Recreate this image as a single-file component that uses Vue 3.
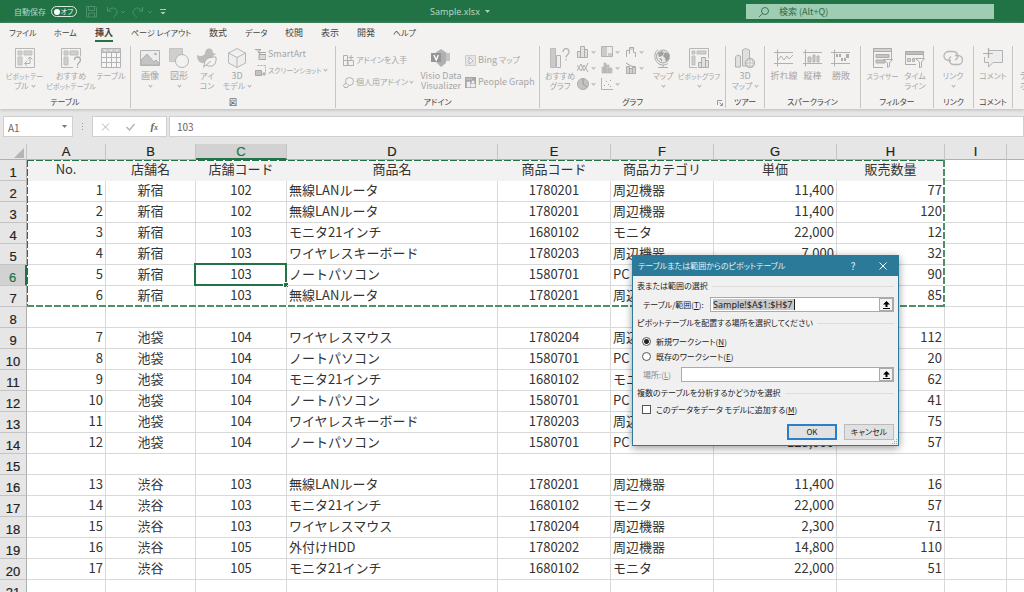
<script setup>
import { ref } from 'vue'

const tabs = ['ファイル', 'ホーム', '挿入', 'ページ レイアウト', '数式', 'データ', '校閲', '表示', '開発', 'ヘルプ']

const icons = {
  pivot: '<path d="M.5.5h19v19H.5z" fill="none" stroke="#adadad"/><path d="M3 3h4v4H3zM9 3h8v4H9zM3 9h4v8H3z" fill="#c9c9c9" stroke="#b9b9b9"/><path d="M10 15.500h5v-6M12 13l-2.500 2.500L12 18M12.500 11.500L15 9l2.500 2.500" fill="none" stroke="#a5a5a5"/>',
  pivotHelp: '<path d="M12 19.500H.5V.5h19v8" fill="none" stroke="#adadad"/><path d="M3 3h4v4H3zM9 3h8v4H9zM3 9h4v8H3z" fill="#c9c9c9" stroke="#b5b5b5"/><path d="M13.500 12c0-4 6-4 6 0 0 2.500-3 2.500-3 5.500M16.500 18.500v1.500" fill="none" stroke="#a2a2a2" stroke-width="1.300"/>',
  table: '<path d="M.5.5h19v19H.5z" fill="#f7f7f7" stroke="#a9a9a9"/><path d="M1 1h18v3H1z" fill="#c2c2c2"/><path d="M.5 4.500h19M.5 9.500h19M.5 14.500h19M5.500 4v15M10.500 4v15M15.500 4v15" stroke="#a9a9a9"/><path d="M3 1.500l1 1.500 1-1.500M9 1.500l1 1.500 1-1.500M15 1.500l1 1.500 1-1.500" stroke="#f5f5f5" fill="none"/>',
  image: '<path d="M.5 2.500h19v15H.5z" fill="#ededed" stroke="#a9a9a9"/><path d="M1 17V12l6-6 7 8 2-2 3 3v2z" fill="#bdbdbd" stroke="#a5a5a5"/><circle cx="15.500" cy="6" r="1.300" fill="#a9a9a9"/>',
  shapes: '<path d="M.5.5h13v13H.5z" fill="#cacaca" stroke="#bdbdbd"/><circle cx="13" cy="13" r="6.500" fill="#f2f2f2" stroke="#a9a9a9"/>',
  icons: '<path d="M0 7c3 2 6 1 8-1 0-7 8-7 8-1l3 1-3 2c1 3 2 4 0 7H5C1 14 0 11 0 7z" fill="#b4b4b4"/><path d="M7 19c0-8 4-10 12-10 1 8-4 11-10 8M6 19.500l8-6.500" fill="#f3f2f1" stroke="#a5a5a5"/>',
  cube: '<path d="M10 .5l8.500 4.500v10L10 19.500 1.500 15V5zM1.500 5l8.500 4.500L18.500 5M10 9.500v10" fill="#eee" stroke="#adadad"/>',
  visio: '<path d="M10 1l6 4-6 5-6-5z" fill="#aaa"/><path d="M13 5h6v8h-6z" fill="#bdbdbd"/><path d="M9 5h6v10l-5 4-5-5z" fill="#a5a5a5"/><path d="M0 5h10v9H0z" fill="#858585"/><path d="M3 7l2.200 5 2.200-5" fill="none" stroke="#fff" stroke-width="1.400"/>',
  chartHelp: '<path d="M.5.5h5v19h-5z" fill="#c4c4c4" stroke="#b2b2b2"/><path d="M6.500 7.500h4v12h-4z" fill="#eee" stroke="#a9a9a9"/><path d="M13 4c0-4.500 6-4.500 6 0 0 2.500-3 2.500-3 5.500M16 11v1.500" fill="none" stroke="#a9a9a9" stroke-width="1.300"/>',
  globe: '<circle cx="10" cy="8.500" r="6.500" fill="#e5e5e5" stroke="#999"/><path d="M5 5l4-2 2 2-2 3-3 1zM12 4l4 2v5l-3 3-1-4-2-2zM6 10l3 1v3z" fill="#929292"/><path d="M5 1.500C0 5 1 14 7 16.500c3 1 6 .5 8-1M10 17v2M5 19.500h10" fill="none" stroke="#a0a0a0"/>',
  pivotChart: '<path d="M8 19.500H.5V.5h19v10" fill="none" stroke="#adadad"/><path d="M3 3h3v3H3zM8 3h9v3H8zM3 8h3v9H3z" fill="#c9c9c9" stroke="#b5b5b5"/><path d="M9.500 14.500h3v5h-3zM12.500 9.500h4v10h-4zM16.500 12.500h3v7h-3z" fill="#ddd" stroke="#a0a0a0"/>',
  map3d: '<path d="M.5 9l2-2 3 1v11h-5zM7.500 2l3-1.500 4 1.500v16h-7z" fill="#ddd" stroke="#a5a5a5"/><circle cx="15" cy="15" r="4.700" fill="#f3f2f1" stroke="#a0a0a0"/><path d="M10.500 15h9M15 10.500v9M12 12h6M12 18h6M13 11c-1.500 3-1.500 5 0 8M17 11c1.500 3 1.500 5 0 8" fill="none" stroke="#a9a9a9" stroke-width=".7"/>',
  sparkLine: '<path d="M0 4.500h19M0 15.500h19M3.500 1.500v17" stroke="#a5a5a5"/><path d="M4 12l3-4 3 4 3-4 2 3 4-4" fill="none" stroke="#a5a5a5"/>',
  sparkBar: '<path d="M0 4.500h19M0 15.500h19M2.500 1.500v17" stroke="#a5a5a5"/><path d="M5 9h3v5H5zM10 7h2v7h-2zM14 8h2v6h-2z" fill="#c4c4c4" stroke="#a9a9a9"/>',
  sparkWin: '<path d="M0 4.500h19M0 15.500h19M3.500 1.500v17" stroke="#a5a5a5"/><path d="M5 6h2v3H5zM8 6h2v3H8zM10 10h2v3h-2zM13 10h2v3h-2zM15 6h3v4h-3z" fill="#a0a0a0"/>',
  slicer: '<path d="M10 19.500H.5V.5h18v11" fill="none" stroke="#a0a0a0"/><path d="M.5.5h18v3H.5z" fill="#ccc" stroke="#a0a0a0"/><path d="M3 6.500h13v3H3zM3 12h9v3H3z" fill="#bcbcbc" stroke="#a2a2a2"/><path d="M10.500 11.500h9L16.500 15v3.500l-2 1V15z" fill="#f3f2f1" stroke="#a0a0a0"/>',
  timeline: '<path d="M11 16.500H.5V3.500h18v6" fill="none" stroke="#a0a0a0"/><path d="M.5 3.500h18v3H.5z" fill="#b4b4b4" stroke="#a0a0a0"/><path d="M2.500 10.500h3v3h-3zM7.500 10.500h2v3h-2z" fill="#ccc" stroke="#a9a9a9"/><path d="M10.500 10.500h9L16.500 14v5l-2 1v-6z" fill="#f3f2f1" stroke="#a0a0a0"/>',
  link: '<path d="M8 12.500H6a5 4.500 0 0 1 0-9h4a5 4.500 0 0 1 2 8.500M12 7.500h3a4.500 4.500 0 0 1 0 9h-5a4.500 4.500 0 0 1-2-8" fill="none" stroke="#adadad" stroke-width="1.300"/>',
  comment: '<path d="M6 2.500h13.500v12H10L5.500 19v-4.500H1.500V9" fill="#ededed" stroke="#a9a9a9"/><path d="M0 5.500h10M5.500 0v10" stroke="#a0a0a0" stroke-width="1.200"/>'
}

const charts = [
  '<path d="M.5 5.500h3v6h-3zM3.500.5h4v11h-4zM7.500 3.500h3v8h-3z" fill="#ddd" stroke="#a0a0a0"/>',
  '<path d="M.5.5h11v10H.5z" fill="#eee" stroke="#a9a9a9"/><path d="M1 1h5v9H1zM7 7h4v3H7z" fill="#c4c4c4"/>',
  '<path d="M1.500 11V4.500h3v-3h4v5h2V11M4.500 4v4M8.500 5v-4" fill="none" stroke="#a0a0a0"/><path d="M5 2h3v2H5z" fill="#ccc"/>',
  '<path d="M0 9l4-7 3 7 4-8M0 3l4 6 3-6 4 7" fill="none" stroke="#a0a0a0"/>',
  '<path d="M1 5h2v6H1zM3 1h2v10H3zM5 3h3v8H5zM8 6h3v5H8z" fill="#bbb" stroke="#a5a5a5" stroke-width=".6"/>',
  '<path d="M1.500 4.500h3v7h-3zM4.500 6.500h3v5h-3zM7.500 5.500h3v6h-3z" fill="#ccc" stroke="#a0a0a0"/><path d="M1 1l5 3 5 1" fill="none" stroke="#999"/>',
  '<circle cx="6" cy="6" r="5.500" fill="#bbb" stroke="#a0a0a0"/><path d="M6 6V1M6 6l4 3" stroke="#8a8a8a" fill="none"/>',
  '<path d="M.5 0v11.500H12" fill="none" stroke="#a9a9a9"/><path d="M3 7h1v1H3zM5 3h1v1H5zM7 6h1v1H7zM9 2h1v1H9zM9 8h1v1H9z" fill="#999"/>'
]

const b = (icon, lines, drop = '') => ({ icon, lines, drop })
const groups = [
  { key: 'tables', label: 'テーブル', items: [b('pivot', ['ピボットテー', 'ブル'], 'inline'), b('pivotHelp', ['おすすめ', 'ピボットテーブル']), b('table', ['テーブル'])] },
  { key: 'illust', label: '図', items: [b('image', ['画像'], 'below'), b('shapes', ['図形'], 'below'), b('icons', ['アイ', 'コン']), b('cube', ['3D', 'モデル'], 'inline')] },
  { key: 'addin', label: 'アドイン', items: [b('visio', ['Visio Data', 'Visualizer'])] },
  { key: 'chart', label: 'グラフ', items: [b('chartHelp', ['おすすめ', 'グラフ'])], more: [b('globe', ['マップ'], 'below'), b('pivotChart', ['ピボットグラフ'], 'below')] },
  { key: 'tour', label: 'ツアー', items: [b('map3d', ['3D', 'マップ'], 'inline')] },
  { key: 'spark', label: 'スパークライン', items: [b('sparkLine', ['折れ線']), b('sparkBar', ['縦棒']), b('sparkWin', ['勝敗'])] },
  { key: 'filter', label: 'フィルター', items: [b('slicer', ['スライサー']), b('timeline', ['タイム', 'ライン'])] },
  { key: 'link', label: 'リンク', items: [b('link', ['リンク'], 'below')] },
  { key: 'comment', label: 'コメント', items: [b('comment', ['コメント'])] }
]

// Kana labels are set smaller than kanji and Latin ones; the longest are smaller still.
const textSize = (s) => {
  if (!/^[ぁ-んァ-ー\s]+$/.test(s)) return ''
  return s.length > 4 && !s.includes(' ') ? 'kana long' : 'kana'
}

const cols = ['A', 'B', 'C', 'D', 'E', 'F', 'G', 'H', 'I', 'J']
const products = {
  lan: ['無線LANルータ', '1780201', '周辺機器', '11,400'],
  monitor: ['モニタ21インチ', '1680102', 'モニタ', '22,000'],
  keyboard: ['ワイヤレスキーボード', '1780203', '周辺機器', '7,000'],
  note: ['ノートパソコン', '1580701', 'PC', '128,000'],
  mouse: ['ワイヤレスマウス', '1780204', '周辺機器', '2,300'],
  hdd: ['外付けHDD', '1780202', '周辺機器', '14,800']
}
const sale = (no, shop, code, p, qty) => [no, shop, code, ...products[p], qty, '', '']
const blank = Array(10).fill('')
const rows = [
  ['No.', '店舗名', '店舗コード', '商品名', '商品コード', '商品カテゴリ', '単価', '販売数量', '', ''],
  sale(1, '新宿', 102, 'lan', 77),
  sale(2, '新宿', 102, 'lan', 120),
  sale(3, '新宿', 103, 'monitor', 12),
  sale(4, '新宿', 103, 'keyboard', 32),
  sale(5, '新宿', 103, 'note', 90),
  sale(6, '新宿', 103, 'lan', 85),
  blank,
  sale(7, '池袋', 104, 'mouse', 112),
  sale(8, '池袋', 104, 'note', 20),
  sale(9, '池袋', 104, 'monitor', 62),
  sale(10, '池袋', 104, 'note', 41),
  sale(11, '池袋', 104, 'keyboard', 75),
  sale(12, '池袋', 104, 'note', 57),
  blank,
  sale(13, '渋谷', 103, 'lan', 16),
  sale(14, '渋谷', 103, 'monitor', 57),
  sale(15, '渋谷', 103, 'mouse', 71),
  sale(16, '渋谷', 105, 'hdd', 110),
  sale(17, '渋谷', 105, 'monitor', 51),
  blank
]

const cellName = ref('A1')
const formula = ref('103')
const range = ref('Sample!$A$1:$H$7')
const target = ref('new')
const query = ref('')
</script>

<template>
  <div class="app">
    <header class="titlebar">
      <label class="autosave">自動保存
        <button class="toggle" type="button" aria-label="自動保存"><i></i>オフ</button>
      </label>
      <svg class="quick" viewBox="0 0 76 12" fill="none" stroke="#5f9f7c">
        <path d="M.5.5h9l1 1v9.500H.5zM2.500.5v4h6v-4M2.500 11V7h6v4" />
        <path d="M21.500 1v4h4M22 5c3-5 9-3 9 1 0 2-2 4-4 5.500M35 5l2 2 2-2" />
        <path d="M56.500 1v4h-4M56 5c-3-5-9-3-9 1 0 2 2 4 4 5.500M62 5l2 2 2-2" />
      </svg>
      <svg class="qmore" viewBox="0 0 6 6"><path d="M0 .5h6" stroke="#a9cfb9" /><path d="M.5 3h5L3 5.500z" fill="#a9cfb9" /></svg>
      <div class="doc">Sample.xlsx <svg viewBox="0 0 5 3"><path d="M0 0h5L2.500 3z" fill="#a9cfb9" /></svg></div>
      <label class="search">
        <svg viewBox="0 0 10 10" fill="none" stroke="#39794f"><circle cx="6" cy="4" r="3.500" /><path d="M3.500 6.500L0 10" /></svg>
        <input v-model="query" aria-label="検索" placeholder="検索 (Alt+Q)">
      </label>
    </header>

    <section class="ribbon">
      <nav class="tabs">
        <button v-for="t in tabs" :key="t" type="button" :class="[{ active: t === '挿入' }, textSize(t) ? 'kana' : '']">{{ t }}</button>
      </nav>
      <div class="groups">
        <div v-for="g in groups" :key="g.key" class="group" :class="g.key">
          <div class="tools">
            <div v-if="g.key === 'addin'" class="side wide">
              <button type="button" class="kana"><svg viewBox="0 0 11 11" fill="none" stroke="#a5a5a5"><path d="M.5.5h4v10h-4zM.5 5.500h10v5h-10zM5 5V10M8 0v5M5.500 2.500h5" /></svg>アドインを入手</button>
              <button type="button" class="kana"><svg viewBox="0 0 11 11" fill="none" stroke="#a5a5a5"><circle cx="6.500" cy="4.500" r="4" /><path d="M3.500 7L2 6.500l-1.500 2 1 2h3l1-2" fill="#f3f2f1" /></svg>個人用アドイン<span class="chev"></span></button>
            </div>
            <button v-for="i in g.items" :key="i.icon" class="big" type="button">
              <svg viewBox="0 0 20 20" v-html="icons[i.icon]"></svg>
              <span v-for="(l, n) in i.lines" :key="l" :class="textSize(l)">{{ l }}<i v-if="i.drop === 'inline' && n === 1" class="chev"></i></span>
              <span v-if="i.drop === 'below'"><i class="chev"></i></span>
            </button>
            <div v-if="g.key === 'illust'" class="side">
              <button type="button"><svg viewBox="0 0 11 11"><path d="M0 .5h6L3 3l3 2.500M4 3.500h7M4 5.500h7v5H4z" fill="#d5d5d5" stroke="#999" /></svg>SmartArt</button>
              <button type="button" class="kana long"><svg viewBox="0 0 11 11"><path d="M2.500.5h8v8" fill="none" stroke="#a5a5a5" stroke-dasharray="2 1" /><path d="M.5 5.500h6v5h-6z" fill="#bbb" stroke="#999" /><path d="M9 7v4M7 9h4" stroke="#999" /></svg>スクリーンショット<span class="chev"></span></button>
            </div>
            <div v-if="g.key === 'addin'" class="side wide">
              <button type="button"><svg viewBox="0 0 11 11"><path d="M.5.5h10v10H.5z" fill="#e4e2e8" stroke="#c8c5cc" /><path d="M4 2v7l4-3z" fill="#fff" stroke="#aaa" /></svg><span>Bing <span class="kana">マップ</span></span></button>
              <button type="button"><svg viewBox="0 0 11 11"><path d="M0 0h11v11H0z" fill="#999" /><path d="M1 2h6M2 5h3v5H2zM7 4h2v2H7zM6 7h4v3H6z" stroke="#eee" fill="#eee" stroke-width=".6" /></svg>People Graph</button>
            </div>
            <template v-if="g.key === 'chart'">
              <div class="minis">
                <button v-for="(c, n) in charts" :key="n" type="button" aria-label="グラフの種類"><svg viewBox="0 0 12 12" v-html="c"></svg><i class="chev"></i></button>
              </div>
              <button v-for="i in g.more" :key="i.icon" class="big" type="button">
                <svg viewBox="0 0 20 20" v-html="icons[i.icon]"></svg>
                <span v-for="l in i.lines" :key="l" :class="textSize(l)">{{ l }}</span>
                <span><i class="chev"></i></span>
              </button>
            </template>
          </div>
          <div class="caption kana">{{ g.label }}</div>
          <svg v-if="g.key === 'chart'" class="launch" viewBox="0 0 6 6" fill="none" stroke="#999"><path d="M.5 5V.5H5M2.500 2.500l3 3M5.500 3v2.500H3" /></svg>
        </div>
        <div class="group cut"><div class="tools"><button class="big" type="button"><svg viewBox="0 0 20 20"></svg><span>テキ</span><span>ボック</span></button></div></div>
      </div>
    </section>

    <section class="formula">
      <label class="name"><input v-model="cellName" aria-label="名前ボックス"><svg viewBox="0 0 5 3"><path d="M0 0h5L2.500 3z" fill="#777" /></svg></label>
      <svg class="dots" viewBox="0 0 2 8"><path d="M0 0h1v1H0zM0 3h1v1H0zM0 6h1v1H0z" fill="#999" /></svg>
      <div class="fx">
        <button type="button" aria-label="キャンセル"><svg viewBox="0 0 9 8" fill="none" stroke="#b5b5b5"><path d="M1 .5l7 7M8 .5l-7 7" /></svg></button>
        <button type="button" aria-label="入力"><svg viewBox="0 0 9 8" fill="none" stroke="#b5b5b5" stroke-width="1.500"><path d="M.5 4l3 3 5-6" /></svg></button>
        <button type="button" class="fn"><em>f<small>x</small></em></button>
      </div>
      <input v-model="formula" class="value" aria-label="数式">
    </section>

    <main class="sheet">
      <table>
        <colgroup>
          <col class="c-head"><col v-for="c in cols" :key="c" :class="'c-' + c">
        </colgroup>
        <thead>
          <tr>
            <th class="corner"><svg viewBox="0 0 10 10"><path d="M10 0v10H0z" fill="#b4b4b4" /></svg></th>
            <th v-for="c in cols" :key="c" scope="col" :class="{ on: c === 'C' }">{{ c === 'J' ? '' : c }}</th>
          </tr>
        </thead>
        <tbody>
          <tr v-for="(r, n) in rows" :key="n" :class="{ heading: n === 0 }">
            <th scope="row" :class="{ on: n === 5 }">{{ n + 1 }}</th>
            <td v-for="(v, k) in r" :key="k" :class="['d-' + cols[k], { current: n === 5 && k === 2 }]">{{ v }}</td>
          </tr>
        </tbody>
      </table>
      <svg class="ants" viewBox="0 0 918 147" fill="none" stroke="#217346">
        <path d="M0 .5h918M.5 0v147" stroke="#fff" />
        <path d="M0 .5h918M.5 0v147" stroke-dasharray="7 2" />
        <path d="M0 146h918M917 0v147" stroke="#fff" stroke-width="2" />
        <path d="M0 146h918M917 0v147" stroke-dasharray="7 2" stroke-width="2" opacity=".8" />
      </svg>
    </main>

    <form class="dialog" role="dialog" aria-labelledby="dlg-title" @submit.prevent>
      <div class="dlg-bar">
        <span id="dlg-title">テーブルまたは範囲からのピボットテーブル</span>
        <button type="button">?</button>
        <button type="button" aria-label="閉じる"><svg viewBox="0 0 8 8" stroke="#fff"><path d="M.5.5l7 7M7.500.5l-7 7" /></svg></button>
      </div>
      <div class="dlg-body">
        <div class="legend">表または範囲の選択</div>
        <div class="field">
          <label for="range">テーブル/範囲(<u>T</u>):</label>
          <span class="picker"><span class="sel"><input id="range" v-model="range"></span><button type="button" aria-label="範囲を選択"><svg viewBox="0 0 7 8"><path d="M3.500 0L7 3.500H4.500V6h-2V3.500H0zM0 7h7v1H0z" fill="#000" /></svg></button></span>
        </div>
        <div class="legend place">ピボットテーブルを配置する場所を選択してください</div>
        <label class="opt"><input v-model="target" type="radio" value="new"><span>新規ワークシート(<u>N</u>)</span></label>
        <label class="opt"><input v-model="target" type="radio" value="old"><span>既存のワークシート(<u>E</u>)</span></label>
        <div class="field loc">
          <label for="loc">場所:(<u>L</u>)</label>
          <span class="picker"><span class="sel"><input id="loc"></span><button type="button" aria-label="場所を選択"><svg viewBox="0 0 7 8"><path d="M3.500 0L7 3.500H4.500V6h-2V3.500H0zM0 7h7v1H0z" fill="#000" /></svg></button></span>
        </div>
        <div class="legend multi">複数のテーブルを分析するかどうかを選択</div>
        <label class="opt"><input type="checkbox"><span>このデータをデータ モデルに追加する(<u>M</u>)</span></label>
        <div class="actions">
          <button type="submit" class="ok">OK</button>
          <button type="button">キャンセル</button>
        </div>
      </div>
      <svg class="grip" viewBox="0 0 7 7"><path d="M5 1h1v1H5zM3 3h1v1H3zM5 3h1v1H5zM1 5h1v1H1zM3 5h1v1H3zM5 5h1v1H5z" fill="#aaa" /></svg>
    </form>
  </div>
</template>

<style>
html, body { overflow: hidden; }
</style>

<style scoped>
* { box-sizing: border-box; }
.app {
  position: relative;
  height: 100vh;
  overflow: hidden;
  display: flex;
  flex-direction: column;
  background: #e6e6e6;
  color: #444;
  font: 9px/10px "Noto Sans CJK JP", sans-serif;
  font-feature-settings: "palt";
}
button, input { font: inherit; font-feature-settings: inherit; color: inherit; padding: 0; margin: 0; border: 0; background: none; }
button { white-space: nowrap; }
svg { display: block; flex: none; }
.kana { font-size: 8px; }
.kana.long { font-size: 7px; }

.titlebar { flex: none; height: 23px; background: #217346; color: #b4d5c2; display: flex; align-items: center; position: relative; padding-left: 14px; }
.autosave { display: flex; align-items: center; gap: 5px; font-size: 8px; }
.toggle { display: flex; align-items: center; justify-content: space-between; width: 26px; height: 11px; border: 1px solid #d9eae1; border-radius: 6px; padding: 0 3px 0 2px; font-size: 7px; line-height: 9px; color: #fff; }
.toggle i { width: 6px; height: 6px; border-radius: 50%; background: #fff; }
.quick { width: 76px; height: 12px; margin-left: 9px; opacity: .7; }
.qmore { width: 6px; height: 6px; margin-left: -2px; }
.doc { position: absolute; left: 430px; display: flex; align-items: center; gap: 5px; font: 9px/10px "Noto Sans", sans-serif; }
.doc svg { width: 5px; height: 3px; }
.search { margin-left: auto; margin-right: 30px; width: 248px; height: 15px; background: #9fcdb3; display: flex; align-items: center; gap: 10px; padding-left: 13px; }
.search svg { width: 10px; height: 10px; }
.search input { flex: 1; min-width: 0; outline: 0; }
.search input::placeholder { color: #2c6b47; opacity: 1; }

.ribbon { flex: none; height: 86px; background: #f3f2f1; box-shadow: 0 1px 3px #bbb; position: relative; }
.tabs { display: grid; grid-template-columns: 45px 41px 36px 78px 36px 40px 36px 36px 36px 30px; height: 23px; padding-left: 9px; justify-items: start; align-items: start; }
.tabs button { height: 19px; padding-top: 3px; line-height: 14px; border-bottom: 2px solid transparent; }
.tabs .active { font-weight: 700; border-bottom-color: #217346; }
.groups { display: flex; height: 62px; overflow: hidden; }
.group { flex: none; position: relative; border-right: 1px solid #c8c6c4; display: flex; flex-direction: column; color: #a6a6a6; }
.tools { flex: 1; display: grid; align-items: start; justify-content: start; }
.caption { color: #444; text-align: center; height: 12px; line-height: 12px; }
.big { display: flex; flex-direction: column; align-items: center; padding-top: 2px; min-width: 0; }
.big svg { width: 20px; height: 20px; margin-bottom: 3px; opacity: .85; }
.big span { display: flex; align-items: center; gap: 3px; height: 10px; }
.chev { display: block; flex: none; width: 3px; height: 3px; border: solid #b0b0b0; border-width: 0 1px 1px 0; transform: rotate(45deg); margin-bottom: 2px; }
.tables { width: 131px; }
.tables .tools { grid-template-columns: 47px 46px 34px; padding-left: 1px; }
.illust { width: 205px; }
.illust .tools { grid-template-columns: 30px 28px 28px 32px auto; padding-left: 4px; }
.addin { width: 204px; }
.addin .tools { grid-template-columns: 76px 44px auto; padding-left: 7px; }
.chart { width: 186px; }
.chart .tools { grid-template-columns: 34px 74px 24px 48px; padding-left: 3px; }
.tour { width: 39px; }
.tour .tools, .link .tools, .comment .tools { grid-template-columns: 38px; }
.spark { width: 96px; }
.spark .tools { grid-template-columns: 28px 29px 28px; padding-left: 5px; }
.filter { width: 73px; }
.filter .tools { grid-template-columns: 33px 32px; padding-left: 5px; }
.link { width: 40px; }
.comment { width: 39px; }
.cut { border: 0; flex: 1; }
.cut .tools { padding-left: 7px; }
.cut .big { align-items: flex-start; }
.side { display: flex; flex-direction: column; gap: 4px; padding-top: 2px; padding-left: 2px; }
.side.wide { gap: 10px; padding-top: 8px; }
.side.wide:first-child { padding-left: 0; }
.side button { display: flex; align-items: center; gap: 2px; height: 12px; }
.side svg { width: 11px; height: 11px; opacity: .85; }
.minis { display: grid; grid-template-columns: repeat(3, 24px); row-gap: 4px; }
.minis button { display: flex; align-items: center; gap: 3px; height: 12px; }
.minis svg { width: 12px; height: 12px; opacity: .85; }
.launch { position: absolute; right: 2px; bottom: 2px; width: 6px; height: 6px; }

.formula { flex: none; display: flex; height: 35px; padding: 7px 0 7px 3px; color: #666; font-size: 10px; }
.formula > label, .fx, .value { background: #fff; border: 1px solid #cfcfcf; height: 21px; }
.name { width: 70px; display: flex; align-items: center; padding: 2px 5px 0 4px; }
.name input { flex: 1; min-width: 0; }
.name svg { width: 5px; height: 3px; margin-bottom: 3px; }
.dots { width: 2px; height: 8px; margin: 7px 8px 0 9px; }
.fx { width: 75px; display: flex; align-items: center; justify-content: space-around; }
.fx svg { width: 9px; height: 8px; }
.fn { font: 11px/12px "Liberation Serif", serif; font-weight: 700; }
.fn small { font-size: 8px; }
.value { flex: 1; margin-left: 2px; padding-left: 7px; min-width: 0; }

.sheet { flex: 1; min-height: 0; overflow: hidden; position: relative; background: #fff; }
table { width: 100%; table-layout: fixed; border-collapse: separate; border-spacing: 0; font: 13px/18px "Noto Sans CJK JP", sans-serif; font-feature-settings: normal; color: #333; }
.c-head { width: 27px; } .c-A { width: 79px; } .c-B { width: 90px; } .c-C { width: 91px; } .c-D { width: 211px; }
.c-E { width: 113px; } .c-F { width: 103px; } .c-G { width: 123px; } .c-H { width: 108px; } .c-I { width: 62px; }
th { padding: 0; background: #e6e6e6; color: #222; font: 13px/14px "Liberation Sans", sans-serif; -webkit-text-stroke: 0.2px; }
thead th { height: 16px; padding-top: 1px; border-right: 1px solid #c4c4c4; border-bottom: 1px solid #b0b0b0; }
thead th.on { background: #d2d2d2; color: #217346; border-bottom: 2px solid #217346; line-height: 13px; }
thead th:last-child { border-right: 0; }
.corner svg { width: 10px; height: 10px; margin: 2px 2px 0 auto; }
tbody th { height: 21px; padding-top: 5px; line-height: 15px; border-bottom: 1px solid #c4c4c4; border-right: 1px solid #b0b0b0; }
tbody th.on { background: #d2d2d2; color: #217346; border-right: 2px solid #217346; }
td { height: 21px; padding: 0 2px 2px; border-right: 1px solid #d9d9d9; border-bottom: 1px solid #d9d9d9; white-space: nowrap; text-align: center; position: relative; }
.d-A, .d-G, .d-H { text-align: right; }
.d-D, .d-F { text-align: left; }
.heading td { text-align: center; background: #f2f2f2; border-color: #f2f2f2; }
.heading .d-H { border-right-color: #d9d9d9; }
.heading .d-I, .heading .d-J { background: #fff; border-color: #d9d9d9; }
.d-J { border-right: 0; }
.current::before { content: ""; position: absolute; inset: -2px -1px -1px -2px; border: 2px solid #217346; }
.current::after { content: ""; position: absolute; right: -2px; bottom: -2px; width: 4px; height: 4px; background: #217346; border: solid #fff; border-width: 1px 0 0 1px; box-sizing: content-box; }
.ants { position: absolute; left: 27px; top: 16px; width: 918px; height: 147px; }

.dialog { position: absolute; left: 632px; top: 255px; width: 267px; background: #f0f0f0; border: 1px solid #2b7a99; box-shadow: 0 2px 8px #0006; color: #222; display: flex; flex-direction: column; }
.dlg-bar { height: 20px; background: #2b7a99; color: #e4f2f7; display: flex; align-items: center; padding-left: 5px; }
.dlg-bar span { flex: 1; font-size: 8px; }
.dlg-bar button { width: 30px; height: 20px; display: grid; place-items: center; font-size: 10px; }
.dlg-bar svg { width: 8px; height: 8px; }
.dlg-body { padding: 5px 4px 5px 4px; }
.legend { display: flex; align-items: center; gap: 4px; height: 10px; font-size: 8px; white-space: nowrap; }
.legend::after { content: ""; flex: 1; height: 1px; background: #dcdcdc; }
.place { margin-top: 6px; margin-bottom: 6px; }
.multi { margin-top: 6px; margin-bottom: 4px; }
.field { display: flex; align-items: center; height: 15px; margin-top: 6px; padding-left: 6px; font-size: 8px; }
.field label { flex: none; width: 67px; white-space: nowrap; }
.loc { margin-top: 3px; color: #888; }
.loc label { width: 38px; }
.picker { flex: 1; display: flex; height: 15px; border: 1px solid #aaa; background: #fff; color: #222; }
.sel { flex: 1; display: flex; align-items: center; padding-left: 2px; }
.sel input { width: 100%; height: 11px; }
#range { width: 82px; background: #c8c8c8; border-right: 1px solid #222; font: 9px/11px "Noto Sans", sans-serif; }
.picker button { width: 14px; background: #f3f3f3; border: 1px solid #aaa; display: grid; place-items: center; }
.picker svg { width: 7px; height: 8px; }
.opt { display: flex; align-items: center; gap: 5px; height: 15px; padding-left: 5px; font-size: 8px; white-space: nowrap; }
.opt input { appearance: none; width: 9px; height: 9px; border: 1px solid #555; background: #fff; flex: none; }
.opt input[type=radio] { border-radius: 50%; }
.opt input[type=radio]:checked { background: radial-gradient(circle, #222 0 2px, #fff 3px); }
.actions { display: flex; justify-content: flex-end; gap: 7px; margin-top: 7px; font-size: 8px; }
.actions button { width: 50px; height: 16px; background: #e1e1e1; border: 1px solid #bbb; }
.actions .ok { border: 2px solid #2a7fcb; }
.grip { position: absolute; right: 0; bottom: 0; width: 7px; height: 7px; }
</style>
